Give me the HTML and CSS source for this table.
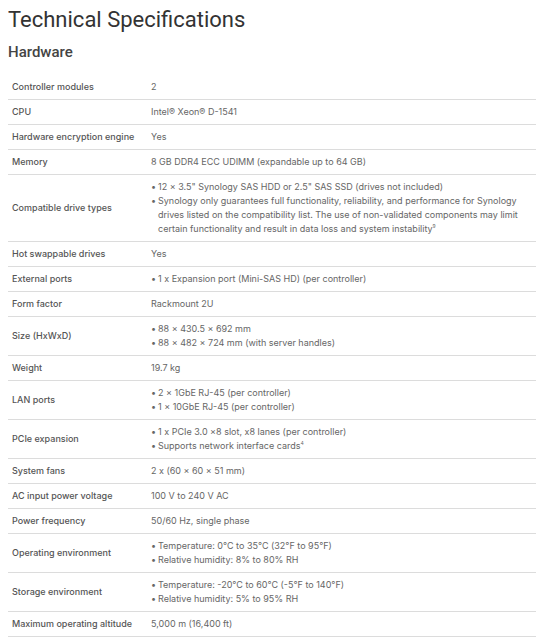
FILE: index.html
```html
<!DOCTYPE html>
<html lang="en">
<head>
<meta charset="utf-8">
<title>Technical Specifications</title>
<link rel="stylesheet" href="styles.css">
</head>
<body>
<h1 class="title">Technical Specifications</h1>
<h2 class="section">Hardware</h2>
<table class="specs">
  <tbody>
    <tr class="first"><th>Controller modules</th><td>2</td></tr>
    <tr><th>CPU</th><td>Intel® Xeon® D-1541</td></tr>
    <tr><th>Hardware encryption engine</th><td>Yes</td></tr>
    <tr><th>Memory</th><td>8 GB DDR4 ECC UDIMM (expandable up to 64 GB)</td></tr>
    <tr><th>Compatible drive types</th><td><ul class="list">
      <li>12 × 3.5" Synology SAS HDD or 2.5" SAS SSD (drives not included)</li>
      <li>Synology only guarantees full functionality, reliability, and performance for Synology drives listed on the compatibility list. The use of non-validated components may limit certain functionality and result in data loss and system instability<sup>9</sup></li>
    </ul></td></tr>
    <tr><th>Hot swappable drives</th><td>Yes</td></tr>
    <tr><th>External ports</th><td><ul class="list"><li>1 x Expansion port (Mini-SAS HD) (per controller)</li></ul></td></tr>
    <tr><th>Form factor</th><td>Rackmount 2U</td></tr>
    <tr><th>Size (HxWxD)</th><td><ul class="list">
      <li>88 × 430.5 × 692 mm</li>
      <li>88 × 482 × 724 mm (with server handles)</li>
    </ul></td></tr>
    <tr><th>Weight</th><td>19.7 kg</td></tr>
    <tr><th>LAN ports</th><td><ul class="list">
      <li>2 × 1GbE RJ-45 (per controller)</li>
      <li>1 × 10GbE RJ-45 (per controller)</li>
    </ul></td></tr>
    <tr><th>PCIe expansion</th><td><ul class="list">
      <li>1 x PCIe 3.0 ×8 slot, x8 lanes (per controller)</li>
      <li>Supports network interface cards<sup>4</sup></li>
    </ul></td></tr>
    <tr><th>System fans</th><td>2 x (60 × 60 × 51 mm)</td></tr>
    <tr><th>AC input power voltage</th><td>100 V to 240 V AC</td></tr>
    <tr><th>Power frequency</th><td>50/60 Hz, single phase</td></tr>
    <tr><th>Operating environment</th><td><ul class="list">
      <li>Temperature: 0°C to 35°C (32°F to 95°F)</li>
      <li>Relative humidity: 8% to 80% RH</li>
    </ul></td></tr>
    <tr><th>Storage environment</th><td><ul class="list">
      <li>Temperature: -20°C to 60°C (-5°F to 140°F)</li>
      <li>Relative humidity: 5% to 95% RH</li>
    </ul></td></tr>
    <tr><th>Maximum operating altitude</th><td>5,000 m (16,400 ft)</td></tr>
  </tbody>
</table>
</body>
</html>
```

FILE: styles.css
```css
html, body {
  background: #ffffff;
}
body {
  margin: 8px;
  font-family: Inter, "Noto Sans", "Liberation Sans", sans-serif;
  color: #444;
}
.title {
  margin: 0;
  font-family: Roboto, "Liberation Sans", sans-serif;
  font-size: 22px;
  line-height: 24px;
  font-weight: 400;
  color: #333;
}
.section {
  margin: 11px 0 0;
  font-family: Roboto, "Liberation Sans", sans-serif;
  font-size: 15px;
  line-height: 18px;
  font-weight: 500;
  color: #444;
}
.specs {
  margin-top: 14px;
  width: 100%;
  border-collapse: collapse;
  font-size: 9px;
  line-height: 14px;
}
.specs tr {
  border-top: 1px solid #dcdcdc;
}
.specs tr.first {
  border-top: none;
}
.specs tr:last-child {
  border-bottom: 1px solid #dcdcdc;
}
.specs th {
  width: 135px;
  padding: 5px 4px 5px 4px;
  text-align: left;
  font-weight: 500;
  color: #555;
  vertical-align: middle;
}
.specs td {
  padding: 5px 4px 5px 0;
  color: #666;
  vertical-align: middle;
}
.list {
  margin: 0;
  padding: 0;
  list-style: none;
}
.list li {
  padding-left: 7px;
  text-indent: -7px;
}
.list li::before {
  content: "•";
  display: inline-block;
  width: 7px;
  text-indent: 0;
}
sup {
  font-size: 5px;
  line-height: 0;
  vertical-align: 4px;
}
```
